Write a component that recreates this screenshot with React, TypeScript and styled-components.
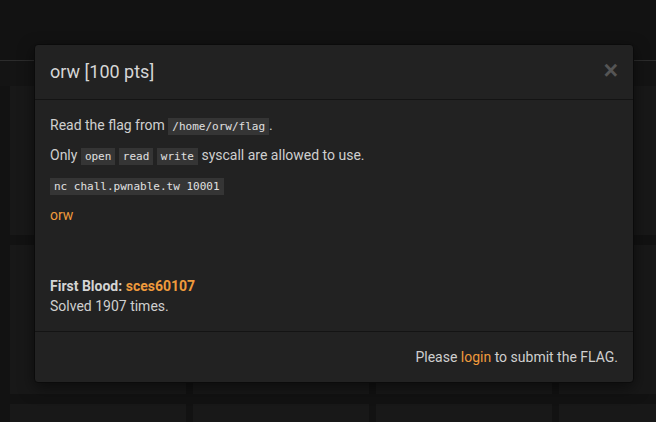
import React from "react";
import styled, { createGlobalStyle } from "styled-components";

const Global = createGlobalStyle`
  html, body { margin: 0; padding: 0; background: #121212; }
  body { width: 656px; height: 422px; overflow: hidden; font-family: Roboto, "Liberation Sans", sans-serif; }
  * { box-sizing: border-box; }
`;

const Page = styled.div`
  position: relative;
  width: 656px;
  height: 422px;
  background: #121212;
  overflow: hidden;
`;

const TopBar = styled.div`
  height: 61px;
  background: #121212;
  border-bottom: 1px solid #2c2c2c;
`;

const Band = styled.div`
  height: 25px;
  background: #141414;
`;

const TileGrid = styled.div`
  display: grid;
  grid-template-columns: repeat(4, 176px);
  column-gap: 7px;
  row-gap: 10px;
  padding-left: 10px;
`;

const Tile = styled.div`
  height: 149px;
  background: #181818;
`;

const Modal = styled.div`
  position: absolute;
  left: 34px;
  top: 44px;
  width: 600px;
  background: #222;
  border: 1px solid #0b0b0b;
  border-radius: 4px;
  box-shadow: 0 5px 15px rgba(0, 0, 0, 0.5);
  color: #cfcfcf;
  font-size: 14px;
  line-height: 20px;
`;

const Header = styled.div`
  display: flex;
  align-items: center;
  justify-content: space-between;
  padding: 15px;
  border-bottom: 1px solid #141414;
`;

const Title = styled.h4`
  margin: 0;
  font-size: 18px;
  font-weight: 400;
  line-height: 24px;
  color: #d6d6d6;
`;

const Close = styled.span`
  font-family: "Liberation Sans", Arial, sans-serif;
  font-size: 25px;
  font-weight: 700;
  line-height: 1;
  color: #555;
  margin-top: -3px;
  margin-right: 0px;
`;

const Body = styled.div`
  padding: 15px;
`;

const P = styled.p<{ $gap?: number }>`
  margin: 0 0 ${(p) => (p.$gap ?? 10)}px;
`;

const Code = styled.code`
  font-family: "DejaVu Sans Mono", "Liberation Mono", monospace;
  font-size: 11px;
  line-height: 1;
  padding: 2px 4px;
  background: #353535;
  color: #e0e0e0;
`;

const Orange = styled.span<{ $bold?: boolean }>`
  color: #ef9a3c;
  font-weight: ${(p) => (p.$bold ? 700 : 400)};
`;

const Bold = styled.strong`
  font-weight: 700;
  color: #d4d4d4;
`;

const Spacer = styled.div`
  height: 41px;
`;

const Footer = styled.div`
  padding: 15px;
  text-align: right;
  border-top: 1px solid #141414;
`;

export default function App() {
  return (
    <Page>
      <Global />
      <TopBar />
      <Band />
      <TileGrid>
        {Array.from({ length: 12 }).map((_, i) => (
          <Tile key={i} />
        ))}
      </TileGrid>
      <Modal>
        <Header>
          <Title>orw [100 pts]</Title>
          <Close>×</Close>
        </Header>
        <Body>
          <P>
            Read the flag from <Code>/home/orw/flag</Code>.
          </P>
          <P>
            Only <Code>open</Code> <Code>read</Code> <Code>write</Code> syscall are allowed to use.
          </P>
          <P>
            <Code>nc chall.pwnable.tw 10001</Code>
          </P>
          <P>
            <Orange>orw</Orange>
          </P>
          <Spacer />
          <P $gap={0}>
            <Bold>First Blood: </Bold>
            <Orange $bold>sces60107</Orange>
            <br />
            Solved 1907 times.
          </P>
        </Body>
        <Footer>
          Please <Orange>login</Orange> to submit the FLAG.
        </Footer>
      </Modal>
    </Page>
  );
}
